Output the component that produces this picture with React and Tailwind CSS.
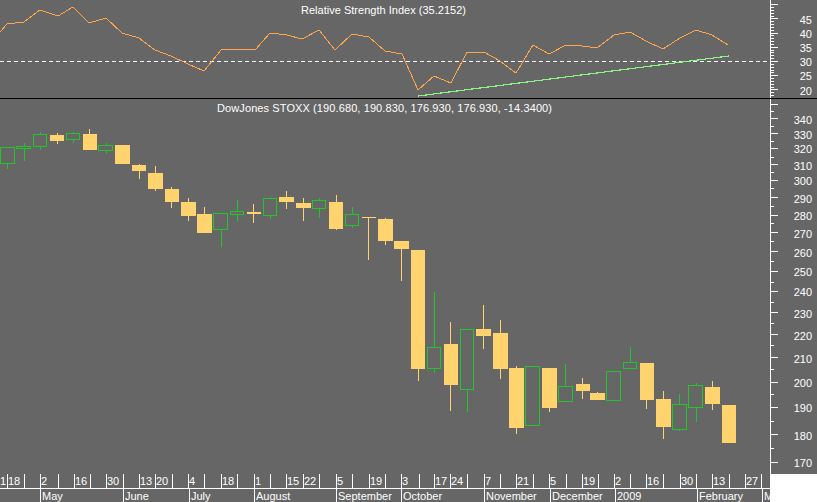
const WHITE = "#ffffff";
const GREEN = "#22c52b";
const CANDLE = "#ffd36e";

// cx, left, right, top, bottom, high, low, up
const CANDLES = [
  [7, 0, 15, 147, 164, 147, 169, 1],
  [24, 16, 31, 146, 149, 143, 161, 1],
  [40, 33, 47, 134, 147, 132, 150, 1],
  [57, 50, 64, 135, 141, 133, 144, 0],
  [73, 66, 80, 133, 140, 132, 143, 1],
  [89, 83, 97, 134, 150, 129, 150, 0],
  [106, 98, 113, 145, 151, 143, 154, 1],
  [122, 115, 130, 145, 164, 145, 164, 0],
  [139, 132, 146, 165, 171, 164, 179, 0],
  [155, 148, 163, 173, 189, 166, 191, 0],
  [171, 165, 179, 189, 202, 187, 208, 0],
  [188, 181, 196, 202, 216, 198, 221, 0],
  [204, 197, 212, 214, 233, 207, 233, 0],
  [221, 213, 228, 213, 230, 213, 247, 1],
  [237, 230, 244, 211, 215, 200, 221, 1],
  [253, 247, 261, 212, 214, 204, 223, 0],
  [270, 263, 277, 198, 216, 197, 219, 1],
  [286, 279, 294, 197, 202, 191, 209, 0],
  [303, 296, 311, 203, 208, 198, 221, 0],
  [319, 312, 326, 200, 209, 198, 218, 1],
  [336, 329, 343, 202, 229, 195, 230, 0],
  [352, 345, 359, 214, 226, 207, 228, 1],
  [368, 362, 376, 217, 218, 217, 260, 0],
  [385, 378, 393, 219, 241, 218, 245, 0],
  [401, 394, 409, 241, 249, 241, 281, 0],
  [418, 411, 425, 250, 369, 250, 381, 0],
  [434, 427, 441, 347, 369, 292, 373, 1],
  [450, 444, 458, 344, 385, 322, 411, 0],
  [467, 460, 474, 329, 390, 329, 412, 1],
  [483, 476, 491, 329, 336, 305, 349, 0],
  [500, 493, 508, 333, 369, 320, 379, 0],
  [516, 509, 524, 368, 428, 366, 434, 0],
  [532, 525, 540, 366, 426, 366, 426, 1],
  [549, 542, 557, 368, 408, 368, 412, 0],
  [565, 558, 573, 386, 402, 364, 402, 1],
  [582, 576, 590, 384, 391, 378, 399, 0],
  [597, 590, 605, 393, 400, 392, 400, 0],
  [613, 606, 621, 371, 401, 371, 401, 1],
  [630, 623, 637, 362, 369, 347, 369, 1],
  [646, 640, 654, 363, 400, 363, 409, 0],
  [663, 656, 671, 399, 427, 391, 439, 0],
  [679, 672, 687, 404, 430, 394, 431, 1],
  [696, 688, 703, 385, 408, 383, 422, 1],
  [712, 705, 720, 387, 404, 381, 410, 0],
  [729, 722, 736, 405, 443, 405, 443, 0],
];

const RSI_POINTS =
  "0,32 7,24 24,22 40,10 58,16 73,7 89,23 106,18 122,33 139,38 155,50 171,56 188,64 204,71 221,50 238,49 255,50 270,33 287,35 302,39 319,30 335,50 352,34 369,37 385,51 402,54 418,90 434,76 451,83 467,52 484,52 500,61 516,73 533,45 549,54 566,45 582,46 597,48 614,35 630,32 646,41 663,49 680,38 696,30 712,35 728,45";

const RSI_LABELS = [
  ["45", 20],
  ["40", 34],
  ["35", 48],
  ["30", 62],
  ["25", 76],
  ["20", 91],
];

// major tick y and label centre y, the scale is logarithmic
const PRICE_TICKS = [
  [350, 104, null],
  [340, 118, 120],
  [330, 133, 135],
  [320, 148, 149],
  [310, 164, 166],
  [300, 180, 181],
  [290, 197, 199],
  [280, 215, 216],
  [270, 232, 234],
  [260, 251, 253],
  [250, 271, 272],
  [240, 291, 292],
  [230, 312, 314],
  [220, 334, 336],
  [210, 357, 359],
  [200, 382, 383],
  [190, 407, 408],
  [180, 434, 436],
  [170, 462, 463],
];

const MINOR_PRICE = [111, 126, 141, 157, 172, 188, 206, 223, 241, 261, 282, 302, 323, 345, 369, 394, 421, 448];

const DATE_TICKS = [7, 24, 40, 58, 74, 90, 106, 123, 139, 155, 172, 188, 204, 221, 237, 254, 270, 286, 303, 319, 336, 352, 369, 385, 401, 419, 434, 450, 467, 484, 500, 516, 533, 549, 566, 582, 598, 614, 630, 646, 663, 680, 696, 712, 729, 745, 761];

const DATE_LABELS = [
  ["1", 0], ["18", 8], ["2", 41], ["16", 75], ["30", 107], ["13", 140], ["20", 156],
  ["4", 189], ["18", 222], ["1", 255], ["15", 287], ["22", 304], ["5", 337], ["19", 370],
  ["3", 402], ["17", 435], ["24", 451], ["7", 485], ["21", 517], ["5", 550], ["19", 583],
  ["2", 615], ["16", 647], ["30", 681], ["13", 713], ["27", 746],
];

const MONTHS = [
  ["May", 40], ["June", 123], ["July", 189], ["August", 254], ["September", 336],
  ["October", 401], ["November", 484], ["December", 550], ["2009", 615], ["February", 697], ["M", 762],
];

const Candle = ({ c }) => {
  const [cx, left, right, top, bottom, high, low, up] = c;
  const color = up ? GREEN : CANDLE;
  return (
    <g shapeRendering="crispEdges">
      {high < top && <rect x={cx} y={high} width="1" height={top - high} fill={color} />}
      {low > bottom && <rect x={cx} y={bottom} width="1" height={low - bottom} fill={color} />}
      {up ? (
        <rect x={left + 0.5} y={top + 0.5} width={right - left - 1} height={bottom - top - 1} fill="none" stroke={color} />
      ) : (
        <rect x={left} y={top} width={right - left} height={bottom - top} fill={color} />
      )}
    </g>
  );
};

const RsiChart = () => (
  <svg width="770" height="98" viewBox="0 0 770 98" className="block shrink-0">
    <text x="301" y="14" fill={WHITE} textLength="165">Relative Strength Index (35.2152)</text>
    <line x1="0" y1="61.5" x2="770" y2="61.5" stroke={WHITE} strokeDasharray="4 3" shapeRendering="crispEdges" />
    <line x1="418" y1="96" x2="729" y2="56" stroke="#8cf585" strokeWidth="1.2" shapeRendering="crispEdges" />
    <polyline points={RSI_POINTS} fill="none" stroke="#ffa64d" shapeRendering="crispEdges" />
  </svg>
);

const RsiAxis = () => {
  const ticks = [];
  for (let v = 50; v >= 17; v--) {
    ticks.push({ y: Math.round(61 + (30 - v) * 2.84), major: v % 5 === 0 });
  }
  return (
    <svg width="47" height="98" viewBox="770 0 47 98" className="block shrink-0">
      <rect x="770" y="0" width="1" height="98" fill={WHITE} />
      {ticks.map((t) => (
        <rect key={t.y} x="770" y={t.y} width={t.major ? 8 : 4} height="1" fill={WHITE} />
      ))}
      {RSI_LABELS.map(([label, y]) => (
        <text key={label} x="812" y={y + 4} fill={WHITE} textAnchor="end">{label}</text>
      ))}
    </svg>
  );
};

const PriceChart = () => (
  <svg width="770" height="375" viewBox="0 99 770 375" className="block shrink-0">
    <text x="217" y="112" fill={WHITE} textLength="335">DowJones STOXX (190.680, 190.830, 176.930, 176.930, -14.3400)</text>
    {CANDLES.map((c) => (
      <Candle key={c[0]} c={c} />
    ))}
  </svg>
);

const PriceAxis = () => (
  <svg width="47" height="375" viewBox="770 99 47 375" className="block shrink-0">
    <rect x="770" y="99" width="1" height="375" fill={WHITE} />
    {MINOR_PRICE.map((y) => (
      <rect key={y} x="770" y={y} width="4" height="1" fill={WHITE} />
    ))}
    {PRICE_TICKS.map(([price, y, labelY]) => (
      <g key={price}>
        <rect x="770" y={y} width="8" height="1" fill={WHITE} />
        {labelY && (
          <text x="812" y={labelY + 4} fill={WHITE} textAnchor="end">{price}</text>
        )}
      </g>
    ))}
  </svg>
);

const TimeAxis = () => (
  <svg width="770" height="28" viewBox="0 474 770 28" className="block">
    <rect x="0" y="488" width="770" height="1" fill={WHITE} />
    {DATE_TICKS.map((x) => (
      <rect key={x} x={x} y="474" width="1" height="14" fill={WHITE} />
    ))}
    {DATE_LABELS.map(([label, x]) => (
      <text key={x} x={x} y="485" fill={WHITE}>{label}</text>
    ))}
    {MONTHS.map(([label, x]) => (
      <g key={label}>
        <rect x={x} y="488" width="1" height="14" fill={WHITE} />
        <text x={x + 2} y="500" fill={WHITE}>{label}</text>
      </g>
    ))}
  </svg>
);

export default function App() {
  return (
    <div className="flex h-[502px] w-[817px] flex-col overflow-hidden bg-white font-['Liberation_Sans',Arial,sans-serif] text-[11px]">
      <div className="flex h-[99px] border-b border-black bg-[#666666]">
        <RsiChart />
        <RsiAxis />
      </div>
      <div className="flex h-[375px] bg-[#666666]">
        <PriceChart />
        <PriceAxis />
      </div>
      <div className="h-[28px] w-[770px] bg-[#666666]">
        <TimeAxis />
      </div>
    </div>
  );
}
